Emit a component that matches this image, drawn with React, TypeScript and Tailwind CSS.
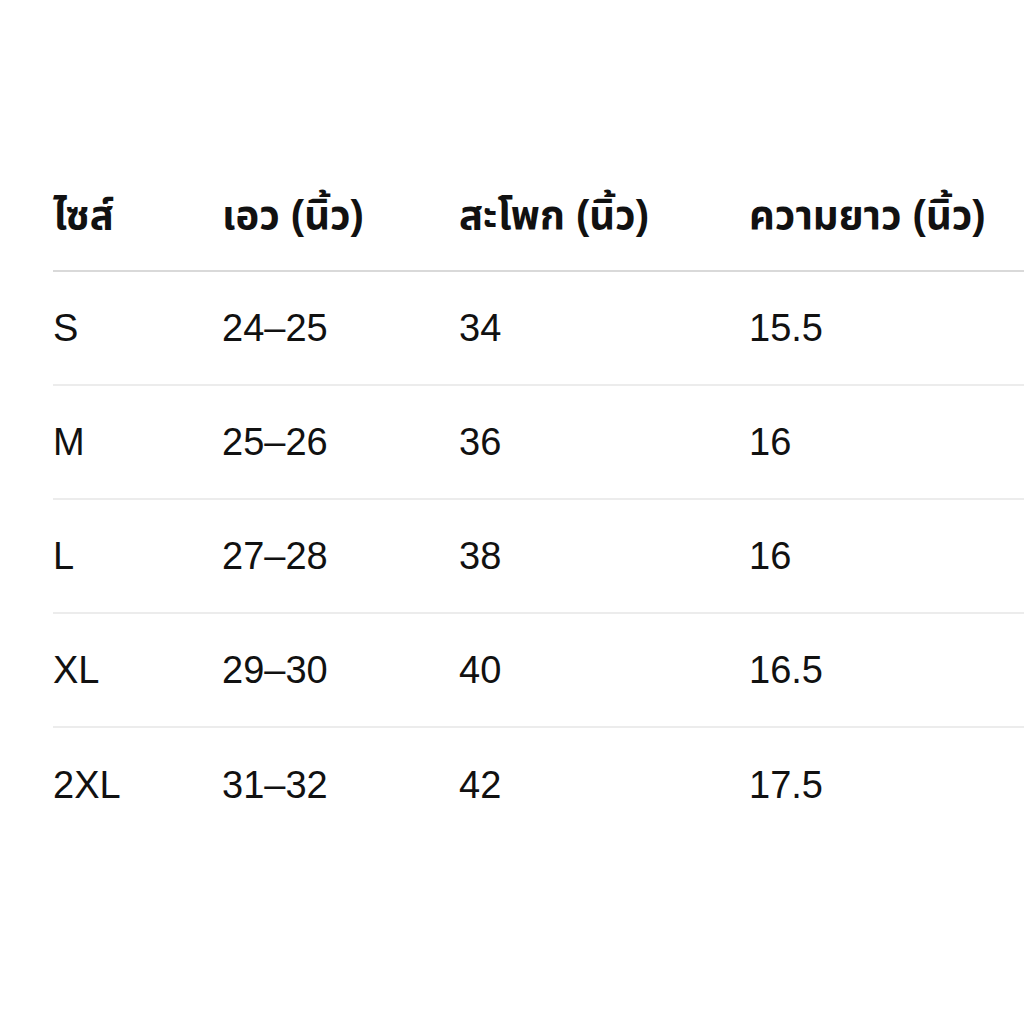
import React from "react";

const rows = [
  ["S", "24–25", "34", "15.5"],
  ["M", "25–26", "36", "16"],
  ["L", "27–28", "38", "16"],
  ["XL", "29–30", "40", "16.5"],
  ["2XL", "31–32", "42", "17.5"],
];

export default function App() {
  return (
    <div className="w-[1024px] h-[1024px] overflow-hidden bg-white text-[#111111]">
      <div className="pt-[157px] pl-[53px]">
        <table className="w-[1100px] border-collapse" style={{ fontFamily: '"Liberation Sans", "Noto Sans", "Noto Sans Thai", sans-serif' }}>
          <colgroup>
            <col className="w-[169px]" />
            <col className="w-[237px]" />
            <col className="w-[290px]" />
            <col />
          </colgroup>
          <thead>
            <tr className="h-[114px] border-b-2 border-[#d9d9d9]">
              {["ไซส์", "เอว (นิ้ว)", "สะโพก (นิ้ว)", "ความยาว (นิ้ว)"].map((h) => (
                <th key={h} className="p-0 pt-[2px] text-left align-middle text-[40px] font-bold leading-none">
                  {h}
                </th>
              ))}
            </tr>
          </thead>
          <tbody>
            {rows.map((r, i) => (
              <tr key={i} className={`h-[114px] ${i < rows.length - 1 ? "border-b-2 border-[#ececec]" : ""}`}>
                {r.map((c, j) => (
                  <td key={j} className="p-0 text-left align-middle text-[38px] leading-none">
                    {c}
                  </td>
                ))}
              </tr>
            ))}
          </tbody>
        </table>
      </div>
    </div>
  );
}
